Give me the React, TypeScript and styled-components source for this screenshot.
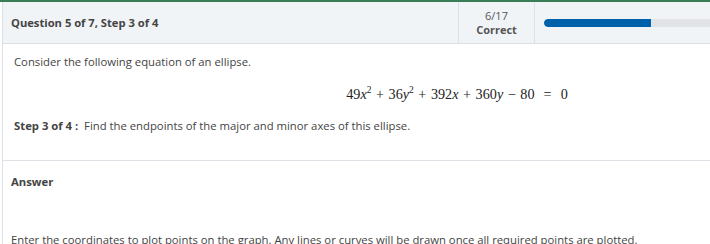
import React from 'react';
import styled, { createGlobalStyle } from 'styled-components';

const GlobalStyle = createGlobalStyle`
  html, body {
    margin: 0;
    padding: 0;
    overflow: hidden;
    background: #ffffff;
  }
  body {
    font-family: 'Open Sans', 'Liberation Sans', sans-serif;
    color: #333;
  }
`;

const Page = styled.div`
  width: 900px;
  border-top: 2px solid #3c7d57;
`;

const Panel = styled.div`
  margin-left: 2px;
  border-left: 1px solid #dde1e5;
`;

const Header = styled.div`
  display: flex;
  align-items: stretch;
  height: 41px;
  background: #f1f4f7;
  border-bottom: 1px solid #dcdfe3;
`;

const Title = styled.div`
  display: flex;
  align-items: center;
  width: 455px;
  padding-left: 8px;
  box-sizing: border-box;
  font-size: 11.2px;
  font-weight: 700;
  color: #444;
`;

const Score = styled.div`
  display: flex;
  flex-direction: column;
  align-items: center;
  justify-content: center;
  width: 75px;
  border-left: 1px solid #dde1e5;
  border-right: 1px solid #dde1e5;
  font-size: 11px;
  line-height: 14px;
  color: #555;
`;

const ScoreLabel = styled.span`
  font-weight: 700;
`;

const ProgressWrap = styled.div`
  flex: 1;
  display: flex;
  align-items: center;
  padding: 0 10px 0 9px;
`;

const Track = styled.div`
  width: 100%;
  height: 8px;
  background: #e1e3e6;
  border-radius: 4px 0 0 4px;
  overflow: hidden;
`;

const Fill = styled.div`
  height: 100%;
  background: #0061ab;
  border-radius: 4px 0 0 4px;
`;

const Section = styled.div<{ $pad: string }>`
  padding: ${(p) => p.$pad};
  font-size: 11.3px;
  color: #444;
`;

const Para = styled.p<{ $mt?: number }>`
  margin: ${(p) => p.$mt ?? 0}px 0 0;
  line-height: 16px;
  white-space: nowrap;
`;

const Equation = styled.div`
  margin-top: 15px;
  text-align: center;
  font-family: 'Liberation Serif', 'Times New Roman', serif;
  font-size: 14.2px;
  color: #222;
  line-height: 18px;
  word-spacing: 1px;
`;

const V = styled.i`
  font-style: italic;
`;

const Sup = styled.sup`
  font-size: 9.5px;
  line-height: 0;
`;

const Divider = styled.div`
  border-top: 1px solid #dde1e5;
`;

const Bold = styled.b`
  font-weight: 700;
`;

const Strong = styled.div`
  font-weight: 700;
  line-height: 16px;
`;

export default function App() {
  const done = 107;
  return (
    <Page>
      <GlobalStyle />
      <Panel>
        <Header>
          <Title>Question 5 of 7, Step 3 of 4</Title>
          <Score>
            <span>6/17</span>
            <ScoreLabel>Correct</ScoreLabel>
          </Score>
          <ProgressWrap>
            <Track>
              <Fill style={{ width: `${done}px` }} />
            </Track>
          </ProgressWrap>
        </Header>
        <Section $pad="10px 0 26px 11px">
          <Para>Consider the following equation of an ellipse.</Para>
          <Equation>
            49<V>x</V>
            <Sup>2</Sup> + 36<V>y</V>
            <Sup>2</Sup> + 392<V>x</V> + 360<V>y</V> − 80 &nbsp;= &nbsp;0
          </Equation>
          <Para $mt={15}>
            <Bold>Step 3 of 4 :</Bold>&nbsp; Find the endpoints of the major and minor axes of this ellipse.
          </Para>
        </Section>
        <Divider />
        <Section $pad="13px 0 0 8px">
          <Strong>Answer</Strong>
          <Para $mt={42}>
            Enter the coordinates to plot points on the graph. Any lines or curves will be drawn once all required points are plotted.
          </Para>
        </Section>
      </Panel>
    </Page>
  );
}
